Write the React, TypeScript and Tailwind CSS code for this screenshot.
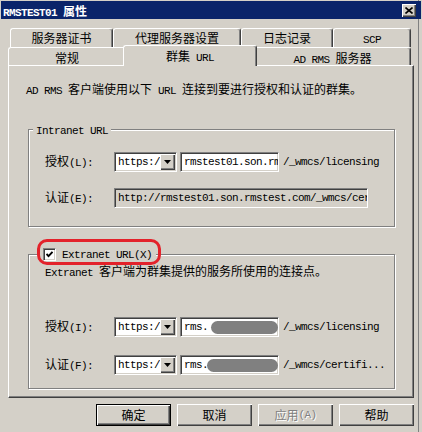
import type { ReactNode } from "react";

// latin runs: half-width monospace like the dialog's bitmap font
const M = "font-['Liberation_Mono',monospace] text-[11px] tracking-[-0.6px]";

const sunken =
  "border border-t-[#808080] border-l-[#808080] border-r-white border-b-white shadow-[inset_1px_1px_0_#404040,inset_-1px_-1px_0_#d4d0c8]";
const raised =
  "shadow-[inset_1px_1px_0_#fff,inset_-1px_-1px_0_#404040,inset_-2px_-2px_0_#808080]";
const etched = "border border-[#808080] shadow-[inset_1px_1px_0_#fff,1px_1px_0_#fff]";

function L({ children }: { children: ReactNode }) {
  return <span className={M}>{children}</span>;
}

function Combo() {
  return (
    <div className={`w-[63px] h-[20px] p-[1px] bg-white flex items-stretch ${sunken}`}>
      <span className={`${M} flex-1 pl-[2px] leading-[16px] overflow-hidden whitespace-nowrap`}>
        https:/
      </span>
      <span className={`w-[15px] bg-[#d4d0c8] flex items-center justify-center ${raised}`}>
        <svg width="7" height="4" viewBox="0 0 7 4">
          <path d="M0 0h7L3.5 4z" fill="#000" />
        </svg>
      </span>
    </div>
  );
}

function Field({ w, gray, children }: { w: number; gray?: boolean; children: ReactNode }) {
  return (
    <div
      className={`h-[20px] pl-[3px] flex items-center overflow-hidden whitespace-nowrap ${M} ${sunken} ${
        gray ? "bg-[#d4d0c8]" : "bg-white"
      }`}
      style={{ width: w }}
    >
      {children}
    </div>
  );
}

function Blob({ w, ml }: { w: number; ml: number }) {
  return (
    <span
      className="inline-block h-[13px] rounded-full bg-[#808080]"
      style={{ width: w, marginLeft: ml }}
    />
  );
}

function UrlRow({
  label,
  mt,
  value,
  suffix,
}: {
  label: ReactNode;
  mt: string;
  value: ReactNode;
  suffix: string;
}) {
  return (
    <div className={`flex items-center h-[20px] pl-[16px] ${mt}`}>
      <span className="w-[69px]">{label}</span>
      <Combo />
      <div className="ml-[3px]">
        <Field w={99}>{value}</Field>
      </div>
      <span className={`${M} ml-[4px]`}>{suffix}</span>
    </div>
  );
}

function BackTab({ w, children }: { w: number; children: ReactNode }) {
  return (
    <div
      className="h-[19px] border-t border-l border-white border-r border-r-[#404040] rounded-t-[3px] shadow-[inset_-1px_0_0_#808080] text-center leading-[18px]"
      style={{ width: w }}
    >
      {children}
    </div>
  );
}

function Button({ children, def, disabled }: { children: ReactNode; def?: boolean; disabled?: boolean }) {
  return (
    <div
      className={`w-[75px] h-[22px] flex items-center justify-center ${raised} ${
        def ? "border border-black" : ""
      } ${disabled ? "text-[#808080] [text-shadow:1px_1px_0_#fff]" : ""}`}
    >
      {children}
    </div>
  );
}

export default function App() {
  return (
    <div className="w-[422px] h-[432px] bg-[#d4d0c8] text-black text-[12px] leading-[16px] font-['Noto_Sans_CJK_SC',sans-serif] overflow-hidden shadow-[inset_-3px_0_0_#d4d0c8,inset_-4px_0_0_#808080]">
      {/* Title bar */}
      <div className="mt-[1px] mx-[1px] h-[18px] bg-[#0a246a] flex items-center pl-[2px] pr-[5px]">
        <span className="mt-[3px] text-white font-bold leading-[12px]">
          <span className={`${M} font-bold tracking-[-0.3px]`}>RMSTEST01 </span>属性
        </span>
        <div className={`ml-auto w-[14px] h-[13px] bg-[#d4d0c8] flex items-center justify-center ${raised}`}>
          <svg width="8" height="7" viewBox="0 0 8 7">
            <path d="M0.5 0.5l7 6M7.5 0.5l-7 6" stroke="#000" strokeWidth="1.6" />
          </svg>
        </div>
      </div>

      {/* Tabs, back row */}
      <div className="flex mt-[9px] pl-[10px]">
        <BackTab w={103}>服务器证书</BackTab>
        <BackTab w={128}>代理服务器设置</BackTab>
        <BackTab w={92}>日志记录</BackTab>
        <BackTab w={78}>
          <L>SCP</L>
        </BackTab>
      </div>

      {/* Tabs, front row */}
      <div className="flex items-end h-[18px] pl-[8px]">
        <div className="w-[117px] h-[18px] border-t border-l border-white rounded-tl-[3px] text-center leading-[18px] pt-[1px]">
          常规
        </div>
        <div className="relative z-10 -mx-[2px] -mb-[1px] w-[134px] h-[21px] bg-[#d4d0c8] border-t border-l border-white border-r border-r-[#404040] rounded-t-[3px] shadow-[inset_-1px_0_0_#808080] text-center pt-[2px]">
          群集<L> URL</L>
        </div>
        <div className="w-[156px] h-[18px] border-t border-white border-r border-r-[#404040] rounded-tr-[3px] shadow-[inset_-1px_0_0_#808080] text-center leading-[18px] pt-[1px]">
          <L>AD RMS </L>服务器
        </div>
      </div>

      {/* Panel */}
      <div className="ml-[8px] w-[406px] h-[333px] border border-t-white border-l-white border-r-[#404040] border-b-[#404040] shadow-[inset_-1px_-1px_0_#808080]">
        <p className="mt-[15px] ml-[17px] whitespace-nowrap">
          <L>AD RMS </L>客户端使用以下<L> URL </L>连接到要进行授权和认证的群集。
        </p>

        {/* Intranet */}
        <div className={`relative mt-[30px] ml-[19px] w-[367px] h-[98px] ${etched}`}>
          <span className="absolute -top-[9px] left-[4px] px-[3px] bg-[#d4d0c8]">
            <L>Intranet URL</L>
          </span>
          <UrlRow
            mt="mt-[22px]"
            label={
              <>
                授权<L>(L):</L>
              </>
            }
            value="rmstest01.son.rm"
            suffix="/_wmcs/licensing"
          />
          <div className="flex items-center h-[20px] pl-[16px] mt-[16px]">
            <span className="w-[69px]">
              认证<L>(E):</L>
            </span>
            <Field w={254} gray>
              http://rmstest01.son.rmstest.com/_wmcs/cer
            </Field>
          </div>
        </div>

        {/* Extranet */}
        <div className={`relative mt-[27px] ml-[19px] w-[367px] h-[135px] ${etched}`}>
          <div className="absolute -top-[9px] left-[11px] h-[16px] flex items-center pl-[3px] pr-[4px] bg-[#d4d0c8]">
            <span className={`w-[13px] h-[13px] bg-white flex items-center justify-center ${sunken}`}>
              <svg width="7" height="7" viewBox="0 0 7 7">
                <path d="M0.5 3l2 2.2L6.5 0.8" stroke="#000" strokeWidth="1.9" fill="none" />
              </svg>
            </span>
            <span className="ml-[6px]">
              <L>Extranet URL(X)</L>
            </span>
            <span className="absolute -top-[7px] -left-[3px] w-[124px] h-[26px] rounded-[10px] border-[3px] border-[#e3222b]" />
          </div>
          <p className="mt-[8px] ml-[16px] whitespace-nowrap">
            <L>Extranet </L>客户端为群集提供的服务所使用的连接点。
          </p>
          <UrlRow
            mt="mt-[36px]"
            label={
              <>
                授权<L>(I):</L>
              </>
            }
            value={
              <>
                rms.
                <Blob w={68} ml={3} />
              </>
            }
            suffix="/_wmcs/licensing"
          />
          <UrlRow
            mt="mt-[18px]"
            label={
              <>
                认证<L>(F):</L>
              </>
            }
            value={
              <>
                rms.
                <Blob w={71} ml={-1} />
              </>
            }
            suffix="/_wmcs/certifi..."
          />
        </div>
      </div>

      {/* Buttons */}
      <div className="flex justify-end gap-[6px] pr-[8px] mt-[6px]">
        <Button def>确定</Button>
        <Button>取消</Button>
        <Button disabled>
          应用<L>(A)</L>
        </Button>
        <Button>帮助</Button>
      </div>
    </div>
  );
}
